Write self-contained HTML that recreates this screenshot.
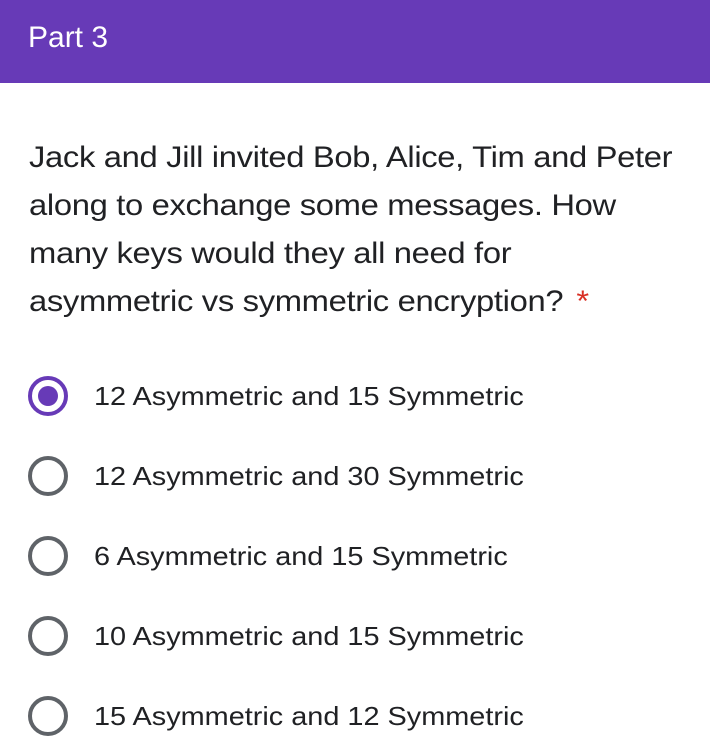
<!DOCTYPE html>
<html><head><style>
body{margin:0;width:710px;height:756px;background:#fff;overflow:hidden;font-family:"Liberation Sans",Arial,sans-serif;color:#202124}
.hdr{height:83px;background:#673ab7;color:#fff;font-size:30px;line-height:76px;padding-left:28px}
.hdr span{display:inline-block;transform:scaleX(1.0);transform-origin:left}
.q{position:absolute;left:29px;top:134px;font-size:29.5px;line-height:48px;white-space:nowrap;transform:scaleX(1.11);transform-origin:left top;letter-spacing:-0.3px}
.q span{color:#d93025;margin-left:4px}
.opt{position:absolute;left:0;font-size:26px;height:40px;line-height:40px;width:710px}
.opt svg{position:absolute;left:27px;top:0}
.opt div{position:absolute;left:94px;white-space:nowrap;transform:scaleX(1.11);transform-origin:left}
</style></head><body>
<div class="hdr"><span>Part 3</span></div>
<div class="q">Jack and Jill invited Bob, Alice, Tim and Peter<br>along to exchange some messages. How<br>many keys would they all need for<br>asymmetric vs symmetric encryption? <span>*</span></div>
<div class="opt" style="top:376px"><svg width="42" height="42"><circle cx="21" cy="20" r="18" fill="none" stroke="#673ab7" stroke-width="4"/><circle cx="21" cy="20" r="10" fill="#673ab7"/></svg><div>12 Asymmetric and 15 Symmetric</div></div>
<div class="opt" style="top:456px"><svg width="42" height="42"><circle cx="21" cy="20" r="18" fill="none" stroke="#5f6368" stroke-width="4"/></svg><div>12 Asymmetric and 30 Symmetric</div></div>
<div class="opt" style="top:536px"><svg width="42" height="42"><circle cx="21" cy="20" r="18" fill="none" stroke="#5f6368" stroke-width="4"/></svg><div>6 Asymmetric and 15 Symmetric</div></div>
<div class="opt" style="top:616px"><svg width="42" height="42"><circle cx="21" cy="20" r="18" fill="none" stroke="#5f6368" stroke-width="4"/></svg><div>10 Asymmetric and 15 Symmetric</div></div>
<div class="opt" style="top:696px"><svg width="42" height="42"><circle cx="21" cy="20" r="18" fill="none" stroke="#5f6368" stroke-width="4"/></svg><div>15 Asymmetric and 12 Symmetric</div></div>
</body></html>
